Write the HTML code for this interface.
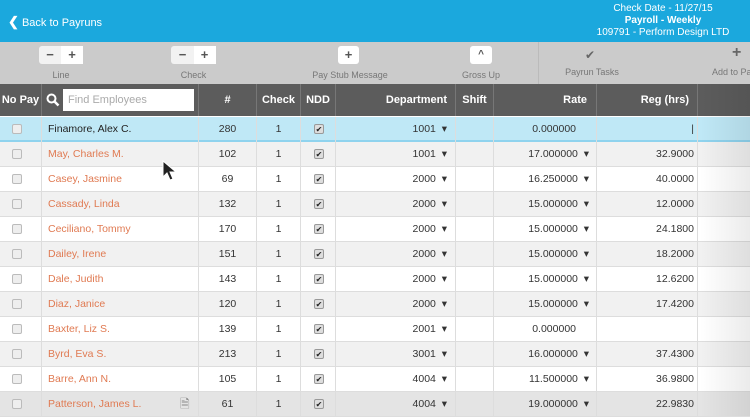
<!DOCTYPE html>
<html><head><style>
*{margin:0;padding:0;box-sizing:border-box}
body{width:750px;height:416px;overflow:hidden;font-family:"Liberation Sans",sans-serif;background:#fff;position:relative}
.top{position:absolute;left:0;top:0;width:750px;height:42px;background:#1ba8dd;color:#fff}
.back{position:absolute;left:8px;top:14px;font-size:11px}
.info{position:absolute;left:573px;top:3px;width:180px;text-align:center;font-size:10px;line-height:12px}
.tb{position:absolute;left:0;top:42px;width:750px;height:42px;background:#cbcbcb}
.btn{position:absolute;top:4px;height:18px;background:#f2f2f2;border-radius:3px;font-size:13px;font-weight:bold;color:#555;text-align:center;line-height:18px}
.lbl{position:absolute;top:28px;font-size:9px;color:#777;text-align:center}
.hdr{position:absolute;left:0;top:84px;width:750px;height:32px;background:#5c5c5c;color:#fff;font-size:11px;font-weight:bold}
.hc{position:absolute;top:0;height:32px;line-height:32px;border-right:1px solid #777}
.row{position:absolute;left:0;width:750px;height:25px;font-size:10.5px;color:#333;border-bottom:1px solid #ddd}
.c{position:absolute;top:0;height:25px;line-height:25px;border-right:1px solid #ddd}
.cb{position:absolute;left:12px;top:7px;width:10px;height:10px;border:1px solid #bbb;border-radius:2px;background:#eee}
.ck{position:absolute;left:13px;top:7px;width:10px;height:10px;border:1px solid #999;border-radius:2px;background:#ddd;font-size:8px;line-height:9px;text-align:center;color:#222}
.nm{color:#e07a52}
</style></head><body>
<div class="top">
<div class="back"><b style="font-size:13px">&#10094;</b> Back to Payruns</div>
<div class="info">Check Date - 11/27/15<br><b>Payroll - Weekly</b><br>109791 - Perform Design LTD</div>
</div>
<div class="tb">
<div class="btn" style="left:39px;width:44px"><span style="display:inline-block;width:22px">−</span><span style="display:inline-block;width:22px;background:#fff">+</span></div>
<div class="lbl" style="left:39px;width:44px">Line</div>
<div class="btn" style="left:171px;width:45px"><span style="display:inline-block;width:22px">−</span><span style="display:inline-block;width:22px;background:#fff">+</span></div>
<div class="lbl" style="left:171px;width:45px">Check</div>
<div class="btn" style="left:338px;width:21px;background:#fff">+</div>
<div class="lbl" style="left:300px;width:100px">Pay Stub Message</div>
<div class="btn" style="left:470px;width:22px;background:#fff;font-size:10px">^</div>
<div class="lbl" style="left:450px;width:62px">Gross Up</div>
<div style="position:absolute;left:538px;top:0;width:1px;height:42px;background:#bbb"></div>
<div style="position:absolute;left:585px;top:6px;font-size:12px;color:#666">✔</div>
<div class="lbl" style="left:552px;width:80px;top:25px">Payrun Tasks</div>
<div style="position:absolute;left:732px;top:2px;font-size:16px;color:#666;font-weight:bold">+</div>
<div class="lbl" style="left:712px;width:80px;top:25px;text-align:left">Add to Pay</div>
</div>
<div class="hdr">
<div class="hc" style="left:0;width:42px;text-align:center">No Pay</div>
<div class="hc" style="left:42px;width:157px"><svg style="position:absolute;left:4px;top:9px" width="14" height="14"><circle cx="5.5" cy="5.5" r="4" fill="none" stroke="#fff" stroke-width="2"/><path d="M8.5 8.5 L12.5 12.5" stroke="#fff" stroke-width="2.5"/></svg><div style="position:absolute;left:21px;top:5px;width:131px;height:22px;background:#fff;color:#aaa;font-weight:normal;line-height:22px;padding-left:5px;font-size:11px">Find Employees</div></div>
<div class="hc" style="left:199px;width:58px;text-align:center">#</div>
<div class="hc" style="left:257px;width:44px;text-align:center">Check</div>
<div class="hc" style="left:301px;width:35px;text-align:center">NDD</div>
<div class="hc" style="left:336px;width:120px;text-align:right;padding-right:8px">Department</div>
<div class="hc" style="left:456px;width:38px;text-align:center">Shift</div>
<div class="hc" style="left:494px;width:103px;text-align:right;padding-right:9px">Rate</div>
<div class="hc" style="left:597px;width:101px;text-align:right;padding-right:8px">Reg (hrs)</div>
</div>
<div id="rows"></div>
<script>
var d=[["Finamore, Alex C.",280,"1001","0.000000","",1],["May, Charles M.",102,"1001","17.000000","32.9000"],["Casey, Jasmine",69,"2000","16.250000","40.0000"],["Cassady, Linda",132,"2000","15.000000","12.0000"],["Ceciliano, Tommy",170,"2000","15.000000","24.1800"],["Dailey, Irene",151,"2000","15.000000","18.2000"],["Dale, Judith",143,"2000","15.000000","12.6200"],["Diaz, Janice",120,"2000","15.000000","17.4200"],["Baxter, Liz S.",139,"2001","0.000000",""],["Byrd, Eva S.",213,"3001","16.000000","37.4300"],["Barre, Ann N.",105,"4004","11.500000","36.9800"],["Patterson, James L.",61,"4004","19.000000","22.9830"]];
var h="";
d.forEach(function(r,i){
var bg=i==0?"#bfe8f6":(i%2?"#f1f1f1":"#fff");if(i==11)bg="#e4e4e4";
var arrow=(r[3]!="0.000000")?" &nbsp;▾":"";
h+='<div class="row" style="top:'+(117+i*25)+'px;background:'+bg+(i==0?';border-bottom:2px solid #8fd3ee':'')+'">'+
'<div class="c" style="left:0;width:42px"><div class="cb"></div></div>'+
'<div class="c '+(i?'nm':'')+'" style="left:42px;width:157px;padding-left:6px;'+(i?'':'color:#222')+'">'+r[0]+(i==11?'<span style="position:absolute;left:138px;color:#888;font-size:12px">&#128462;</span>':'')+'</div>'+
'<div class="c" style="left:199px;width:58px;text-align:center">'+r[1]+'</div>'+
'<div class="c" style="left:257px;width:44px;text-align:center">1</div>'+
'<div class="c" style="left:301px;width:35px"><div class="ck">✔</div></div>'+
'<div class="c" style="left:336px;width:120px;text-align:right;padding-right:8px">'+r[2]+' &nbsp;▾</div>'+
'<div class="c" style="left:456px;width:38px"></div>'+
'<div class="c" style="left:494px;width:103px;text-align:right;padding-right:'+(arrow?'7':'20')+'px">'+r[3]+arrow+'</div>'+
'<div class="c" style="left:597px;width:101px;text-align:right;padding-right:3px">'+(i==0?'<span style="color:#333">|</span>':r[4])+'</div>'+
'</div>';});
document.getElementById("rows").innerHTML=h;
</script>
<div style="position:absolute;left:700px;top:84px;width:50px;height:332px;background:linear-gradient(90deg,rgba(0,0,0,0),rgba(0,0,0,0.08))"></div>
<svg style="position:absolute;left:162px;top:160px" width="16" height="22"><path d="M1 1 L1 17 L5 13 L8 20 L11 19 L8 12 L14 12 Z" fill="#222" stroke="#fff" stroke-width="1"/></svg>
</body></html>
